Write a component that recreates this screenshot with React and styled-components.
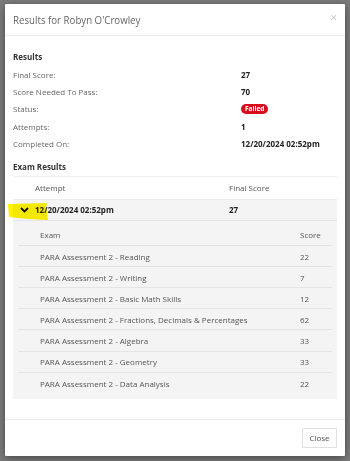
import styled, { createGlobalStyle } from "styled-components";

const GlobalStyle = createGlobalStyle`
  html, body {
    margin: 0;
    padding: 0;
    background: #7c7c7c;
    font-family: "Open Sans", "DejaVu Sans", sans-serif;
  }
`;

const info = [
  { label: "Final Score:", value: "27" },
  { label: "Score Needed To Pass:", value: "70" },
  { label: "Status:", badge: "Failed" },
  { label: "Attempts:", value: "1" },
  { label: "Completed On:", value: "12/20/2024 02:52pm" },
];

const exams = [
  { name: "PARA Assessment 2 - Reading", score: 22 },
  { name: "PARA Assessment 2 - Writing", score: 7 },
  { name: "PARA Assessment 2 - Basic Math Skills", score: 12 },
  { name: "PARA Assessment 2 - Fractions, Decimals & Percentages", score: 62 },
  { name: "PARA Assessment 2 - Algebra", score: 33 },
  { name: "PARA Assessment 2 - Geometry", score: 33 },
  { name: "PARA Assessment 2 - Data Analysis", score: 22 },
];

export default function App() {
  return (
    <>
      <GlobalStyle />
      <Overlay>
        <Modal>
          <Header>
            <Title>Results for Robyn O'Crowley</Title>
            <CloseX>×</CloseX>
          </Header>
          <Body>
            <SectionTitle>Results</SectionTitle>
            <InfoGrid>
              {info.map((row) => (
                <InfoRow key={row.label}>
                  <Label>{row.label}</Label>
                  {row.badge ? <Badge>{row.badge}</Badge> : <Value>{row.value}</Value>}
                </InfoRow>
              ))}
            </InfoGrid>
            <SectionTitle $spaced>Exam Results</SectionTitle>
            <Table>
              <HeadRow>
                <Cell />
                <HeadCell>Attempt</HeadCell>
                <HeadCell>Final Score</HeadCell>
              </HeadRow>
              <AttemptRow>
                <Highlight viewBox="0 0 40 17" preserveAspectRatio="none">
                  <path d="M0 1 L39 0 L38 4 L40 17 L20 16 L1 14 Z" fill="#fff200" />
                </Highlight>
                <Cell>
                  <svg width="9" height="6" viewBox="0 0 9 6">
                    <path d="M1 1 L4.5 4.5 L8 1" fill="none" stroke="#111" strokeWidth="1.8" />
                  </svg>
                </Cell>
                <BoldCell>12/20/2024 02:52pm</BoldCell>
                <BoldCell>27</BoldCell>
              </AttemptRow>
              <Nested>
                <InnerRow $head>
                  <InnerCell>Exam</InnerCell>
                  <InnerCell>Score</InnerCell>
                </InnerRow>
                {exams.map((e, i) => (
                  <InnerRow key={e.name} $last={i === exams.length - 1}>
                    <InnerCell>{e.name}</InnerCell>
                    <InnerCell>{e.score}</InnerCell>
                  </InnerRow>
                ))}
              </Nested>
            </Table>
          </Body>
          <Footer>
            <Button>Close</Button>
          </Footer>
        </Modal>
      </Overlay>
    </>
  );
}

const Overlay = styled.div`
  padding: 4px 5px 6px 5px;
`;

const Modal = styled.div`
  background: #fff;
  box-shadow: 0 2px 8px rgba(0, 0, 0, 0.45);
  border-radius: 1px;
`;

const Header = styled.div`
  display: flex;
  justify-content: space-between;
  align-items: flex-start;
  height: 31px;
  padding: 0 8px;
  border-bottom: 1px solid #ececec;
`;

const Title = styled.div`
  font-size: 9.7px;
  color: #666;
  line-height: 16px;
  margin-top: 9px;
  transform-origin: left center;
  transform: scaleY(1.12);
`;

const CloseX = styled.div`
  font-size: 12px;
  color: #c8c8c8;
  line-height: 12px;
  margin-top: 8px;
`;

const Body = styled.div`
  padding: 14px 8px 20px 8px;
`;

const SectionTitle = styled.div`
  font-size: 8px;
  font-weight: 700;
  color: #333;
  line-height: 14px;
  margin-top: ${(p) => (p.$spaced ? "8px" : "0")};
  margin-bottom: 2px;
`;

const InfoGrid = styled.div`
  display: flex;
  flex-direction: column;
`;

const InfoRow = styled.div`
  display: grid;
  grid-template-columns: 228px 1fr;
  align-items: center;
  height: 17.2px;
`;

const Label = styled.div`
  font-size: 8px;
  color: #666;
`;

const Value = styled.div`
  font-size: 8px;
  font-weight: 700;
  color: #222;
`;

const Badge = styled.span`
  justify-self: start;
  background: #d80d1c;
  color: #fff;
  font-size: 6.5px;
  font-weight: 700;
  line-height: 10px;
  padding: 0 4px;
  border-radius: 6px;
`;

const Table = styled.div`
  border-top: 1px solid #eeeeee;
`;

const HeadRow = styled.div`
  display: grid;
  grid-template-columns: 22px 194px 1fr;
  align-items: center;
  height: 22px;
  background: #fff;
  border-bottom: 1px solid #ececec;
`;

const AttemptRow = styled(HeadRow)`
  position: relative;
  height: 20px;
  background: #f4f4f4;
  border-bottom: 1px solid #e6e6e6;
`;

const Cell = styled.div`
  display: flex;
  justify-content: center;
  align-items: center;
  position: relative;
  z-index: 1;
`;

const HeadCell = styled.div`
  font-size: 8px;
  color: #555;
`;

const BoldCell = styled.div`
  font-size: 8px;
  font-weight: 700;
  color: #222;
  position: relative;
  z-index: 1;
`;

const Highlight = styled.svg`
  position: absolute;
  left: -5px;
  top: 3px;
  width: 40px;
  height: 17px;
  mix-blend-mode: multiply;
  z-index: 2;
`;

const Nested = styled.div`
  background: #f4f4f4;
  padding: 4px 5px 5px 5px;
`;

const InnerRow = styled.div`
  display: grid;
  grid-template-columns: 1fr 32px;
  align-items: center;
  height: 21.1px;
  padding-left: 22px;
  border-bottom: ${(p) => (p.$last ? "none" : "1px solid #e4e4e4")};
  box-sizing: border-box;
`;

const InnerCell = styled.div`
  font-size: 8px;
  color: #555;
`;

const Footer = styled.div`
  display: flex;
  justify-content: flex-end;
  padding: 8px;
  border-top: 1px solid #ececec;
`;

const Button = styled.button`
  font-family: "Open Sans", "DejaVu Sans", sans-serif;
  font-size: 8px;
  color: #555;
  background: #fff;
  border: 1px solid #e0e0e0;
  height: 20px;
  width: 35px;
  padding: 0;
  border-radius: 1px;
`;
